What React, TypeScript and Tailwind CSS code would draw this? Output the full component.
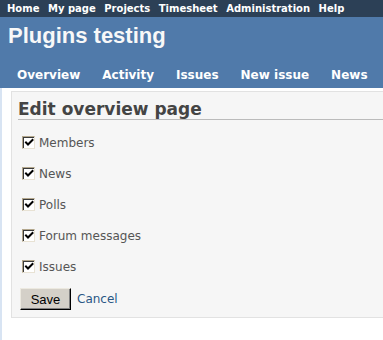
import React from "react";

const Check = () => (
  <span className="w-[13px] h-[13px] shrink-0 border border-[#b3a78d] border-b-[#e8e2d4] border-r-[#e8e2d4] flex">
    <span className="flex-1 border-t border-l border-[#3a3a3a] bg-white relative">
      <svg width="11" height="11" viewBox="0 0 11 11" className="absolute left-[0px] top-[0px]">
        <path d="M2 4.5 L4 6.5 L8.5 2" fill="none" stroke="#000" strokeWidth="2" strokeLinecap="square" />
      </svg>
    </span>
  </span>
);

const items = ["Members", "News", "Polls", "Forum messages", "Issues"];

export default function App() {
  return (
    <div className="w-[383px] h-[340px] overflow-hidden bg-white" style={{ fontFamily: '"DejaVu Sans", Verdana, sans-serif' }}>
      <div className="h-[17px] bg-[#2c4056] flex items-center pl-[7px] gap-[8.5px] text-[10px] font-bold text-white leading-[17px] whitespace-nowrap">
        <span>Home</span>
        <span>My page</span>
        <span>Projects</span>
        <span>Timesheet</span>
        <span>Administration</span>
        <span>Help</span>
      </div>
      <div className="h-[71px] bg-[#507aaa] flex flex-col">
        <div className="pt-[8px] pl-[8px] leading-[22px] text-[22px] font-bold text-[#f8f8f8]" style={{ fontFamily: '"Liberation Sans", Arial, sans-serif' }}>
          Plugins testing
        </div>
        <div className="mt-auto pb-[7px] pl-[17px] flex gap-[22px] text-[12px] leading-[12px] font-bold text-white whitespace-nowrap">
          <span>Overview</span>
          <span>Activity</span>
          <span>Issues</span>
          <span>New issue</span>
          <span>News</span>
        </div>
      </div>
      <div className="flex h-[252px]">
        <div className="w-[2px] bg-[#d8e4f3] shrink-0" />
        <div className="pt-[3px] pl-[9px]">
          <div className="w-[420px] border border-[#e2e2e2] bg-[#f6f6f6] pl-[6px] pt-[7px] pb-[7px]">
            <h2 className="text-[17px] leading-[20px] font-bold text-[#444] border-b border-[#bbbbbb]">Edit overview page</h2>
            <div className="mt-[7px] pl-[4px]">
              {items.map((it) => (
                <div key={it} className="h-[31px] flex items-center gap-[4px] text-[12px] text-[#555]">
                  <Check />
                  <span>{it}</span>
                </div>
              ))}
            </div>
            <div className="mt-[6px] ml-[2px] flex items-center gap-[6px]">
              <button className="w-[51px] h-[22px] bg-[#d4d0c8] border-r border-b border-black border-t border-l border-t-[#ece9e0] border-l-[#ece9e0] shadow-[inset_-1px_-1px_0_#808080] text-[13px] text-black leading-none" style={{ fontFamily: '"Liberation Sans", Arial, sans-serif' }}>
                Save
              </button>
              <span className="text-[12px] text-[#2a5685]">Cancel</span>
            </div>
          </div>
        </div>
      </div>
    </div>
  );
}
